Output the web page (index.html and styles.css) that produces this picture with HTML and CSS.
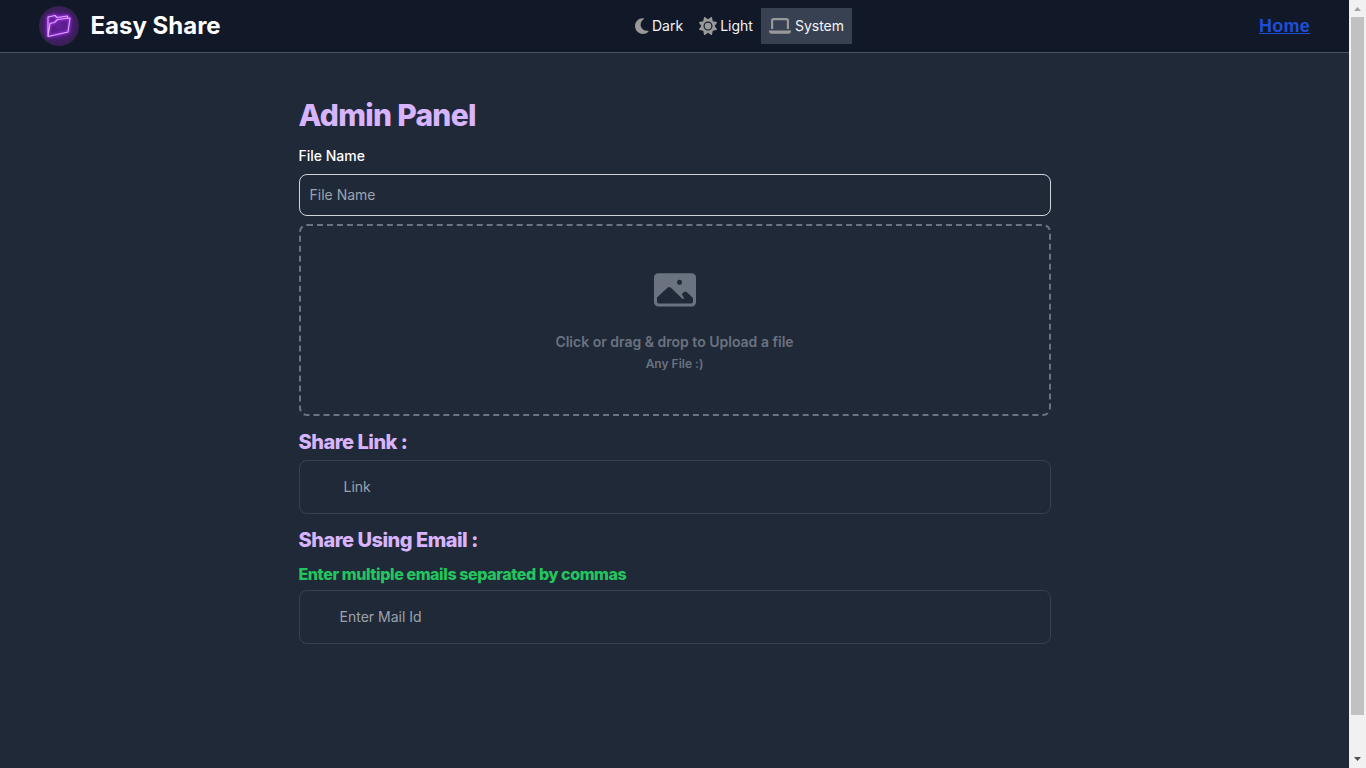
FILE: index.html
```html
<!DOCTYPE html>
<html lang="en">
<head>
<meta charset="utf-8">
<title>Easy Share</title>
<link rel="stylesheet" href="styles.css">
</head>
<body>
<div class="page">
  <header class="header">
    <div class="brand">
      <svg class="logo" width="40" height="40" viewBox="0 0 40 40">
        <defs>
          <radialGradient id="disc"><stop offset="0" stop-color="#67209b"/><stop offset=".55" stop-color="#4d1c78"/><stop offset="1" stop-color="#34204f"/></radialGradient>
          <filter id="glow" x="-30%" y="-30%" width="160%" height="160%"><feGaussianBlur stdDeviation="1.4"/></filter>
        </defs>
        <circle cx="20" cy="20" r="20" fill="url(#disc)"/>
        <g fill="none" stroke-linejoin="round">
          <path d="M9 30.500V11l7-1.500 2 2 10.500-1.500v2.500M9 30.500l2-13 4.500-1 3-3 12.500-1.500-2 14z" stroke="#a32af0" stroke-width="2.600" filter="url(#glow)"/>
          <path d="M9 30.500V11l7-1.500 2 2 10.500-1.500v2.500M9 30.500l2-13 4.500-1 3-3 12.500-1.500-2 14z" stroke="#e0acff" stroke-width="1.100"/>
        </g>
      </svg>
      <span class="brand-name">Easy Share</span>
    </div>
    <nav class="themes">
      <button class="theme"><svg width="14" height="18" viewBox="0 0 398 512"><path d="M223.500 32C100 32 0 132.300 0 256S100 480 223.500 480c60.600 0 115.500-24.200 155.800-63.400c5-4.900 6.300-12.500 3.100-18.700s-10.100-9.700-17-8.500c-9.800 1.700-19.800 2.600-30.100 2.600c-96.900 0-175.500-78.800-175.500-176c0-65.800 36-123.100 89.300-153.300c6.100-3.500 9.200-10.500 7.700-17.300s-7.300-11.900-14.300-12.500c-6.300-.5-12.600-.8-19-.8z" fill="#999"/></svg><span>Dark</span></button>
      <button class="theme"><svg width="18" height="18" viewBox="0 0 512 512"><path d="M361.500 1.200c5 2.100 8.600 6.600 9.600 11.900L391 121l107.900 19.800c5.300 1 9.800 4.600 11.900 9.600s1.500 10.700-1.600 15.200L446.900 256l62.300 90.300c3.100 4.500 3.700 10.200 1.600 15.200s-6.600 8.600-11.900 9.600L391 391 371.100 498.900c-1 5.300-4.600 9.800-9.600 11.900s-10.700 1.500-15.200-1.600L256 446.900l-90.300 62.300c-4.500 3.100-10.200 3.700-15.200 1.600s-8.600-6.600-9.600-11.900L121 391 13.100 371.100c-5.300-1-9.800-4.600-11.900-9.600s-1.500-10.700 1.600-15.200L65.100 256 2.800 165.700c-3.100-4.500-3.700-10.200-1.600-15.200s6.600-8.600 11.900-9.600L121 121 140.900 13.100c1-5.300 4.600-9.800 9.600-11.900s10.700-1.500 15.200 1.600L256 65.100 346.300 2.800c4.500-3.100 10.200-3.700 15.200-1.600z" fill="#999"/><circle cx="256" cy="256" r="112" fill="none" stroke="#111827" stroke-width="32"/></svg><span>Light</span></button>
      <button class="theme active"><svg class="laptop" width="22" height="16" viewBox="0 0 22 16"><path d="M3.100 11V2.600Q3.100 1.100 4.600 1.100h12.800Q18.900 1.100 18.900 2.600V11" fill="none" stroke="#999" stroke-width="2.200"/><path d="M0 12.500h22v.500Q22 15.700 19.300 15.700H2.700Q0 15.700 0 13z" fill="#999"/></svg><span>System</span></button>
    </nav>
    <a class="home" href="#">Home</a>
  </header>
  <main class="panel">
    <h1>Admin Panel</h1>
    <label class="label" for="file-name">File Name</label>
    <input class="field" id="file-name" placeholder="File Name">
    <div class="drop">
      <svg width="42" height="34" viewBox="0 0 42 34"><path fill="#6b7280" fill-rule="evenodd" d="M4.200.300h33.600A4.200 4.200 0 0 1 42 4.500v24.800a4.200 4.200 0 0 1-4.200 4.200H4.200A4.200 4.200 0 0 1 0 29.300V4.500A4.200 4.200 0 0 1 4.200.300zM25.500 6.800a2.500 2.500 0 1 0 0 5 2.500 2.500 0 0 0 0-5zM3 24.600 13.500 14.700q1.700-1.400 3.400 0L28 25.500q1.200 1 1.800 0 .300-.700-.400-1.400L28.100 22q-.500-.700.200-1.400l1.500-1.400q1.600-1.200 3.200 0L39 25v3.700q0 1.800-1.800 1.800H4.800Q3 30.500 3 28.700z"/></svg>
      <p class="drop-title">Click or drag &amp; drop to Upload a file</p>
      <p class="drop-note">Any File :)</p>
    </div>
    <h2>Share Link :</h2>
    <input class="field tall link" placeholder="Link">
    <h2 class="email-title">Share Using Email :</h2>
    <h3>Enter multiple emails separated by commas</h3>
    <input class="field tall mail" placeholder="Enter Mail Id">
  </main>
</div>
<div class="scrollbar">
  <svg width="17" height="17" viewBox="0 0 17 17"><path d="M5 11h7L8.500 7z" fill="#a3a3a3"/></svg>
  <div class="thumb"></div>
  <svg class="down" width="17" height="17" viewBox="0 0 17 17"><path d="M5 6h7l-3.500 4z" fill="#505050"/></svg>
</div>
</body>
</html>
```
FILE: styles.css
```css
* { box-sizing: border-box; margin: 0; }
body { display: flex; height: 768px; overflow: hidden; background: #202937; color: #fff; font-family: Inter, sans-serif; }
svg { display: block; flex: none; }
.page { width: 1349px; }
.header { height: 53px; display: grid; grid-template-columns: 1fr auto 1fr; align-items: center; padding: 0 39px; background: #111827; border-bottom: 1px solid #4b5563; }
.brand { display: flex; align-items: center; gap: 11.5px; }
.brand-name { font-size: 24px; font-weight: 700; line-height: 32px; }
.themes { display: flex; margin-left: 130px; width: 225px; }
.theme { display: flex; align-items: center; gap: 3px; height: 36px; padding: 0 8px; border: 0; background: none; color: #f3f4f6; font: 400 14px/20px Inter, sans-serif; }
.active { background: #374151; }
.laptop { margin-right: 1px; }
.home { justify-self: end; color: #1d4ed8; font: 700 18px/28px "Liberation Sans", sans-serif; letter-spacing: .25px; }
.panel { width: 752px; margin: 0 auto; padding-top: 44px; }
h1 { font-size: 30px; line-height: 36px; font-weight: 800; letter-spacing: -.025em; color: #d8b4fe; }
.label { display: block; margin-top: 13px; font-size: 14px; line-height: 20px; font-weight: 500; }
.field { display: block; width: 100%; height: 42px; margin-top: 8px; padding: 0 10px 2px; border: 1px solid #d1d5db; border-radius: 8px; background: transparent; color: #fff; font: 400 14px/20px Inter, sans-serif; }
.field::placeholder { color: #9ca3af; opacity: 1; }
.drop { height: 192px; margin-top: 8px; padding-top: 47px; border: 2px dashed #6b7280; border-radius: 8px; display: flex; flex-direction: column; align-items: center; color: #6b7280; }
.drop-title { margin-top: 25px; font-size: 14px; line-height: 20px; font-weight: 600; }
.drop-note { margin-top: 4px; font-size: 12px; line-height: 16px; font-weight: 600; }
h2 { margin-top: 12px; font-size: 20px; line-height: 28px; font-weight: 800; letter-spacing: -.025em; color: #d8b4fe; }
.tall { height: 54px; margin-top: 4px; border-color: #374151; }
.link { padding-left: 44px; }
.mail { padding-left: 40px; }
h3 { margin-top: 8px; font-size: 16px; line-height: 24px; font-weight: 800; letter-spacing: -.025em; color: #22c55e; }
.scrollbar { width: 17px; height: 768px; display: flex; flex-direction: column; align-items: center; background: #f1f1f1; }
.thumb { width: 13px; height: 698px; background: #c1c1c1; }
.down { margin-top: auto; }
```
